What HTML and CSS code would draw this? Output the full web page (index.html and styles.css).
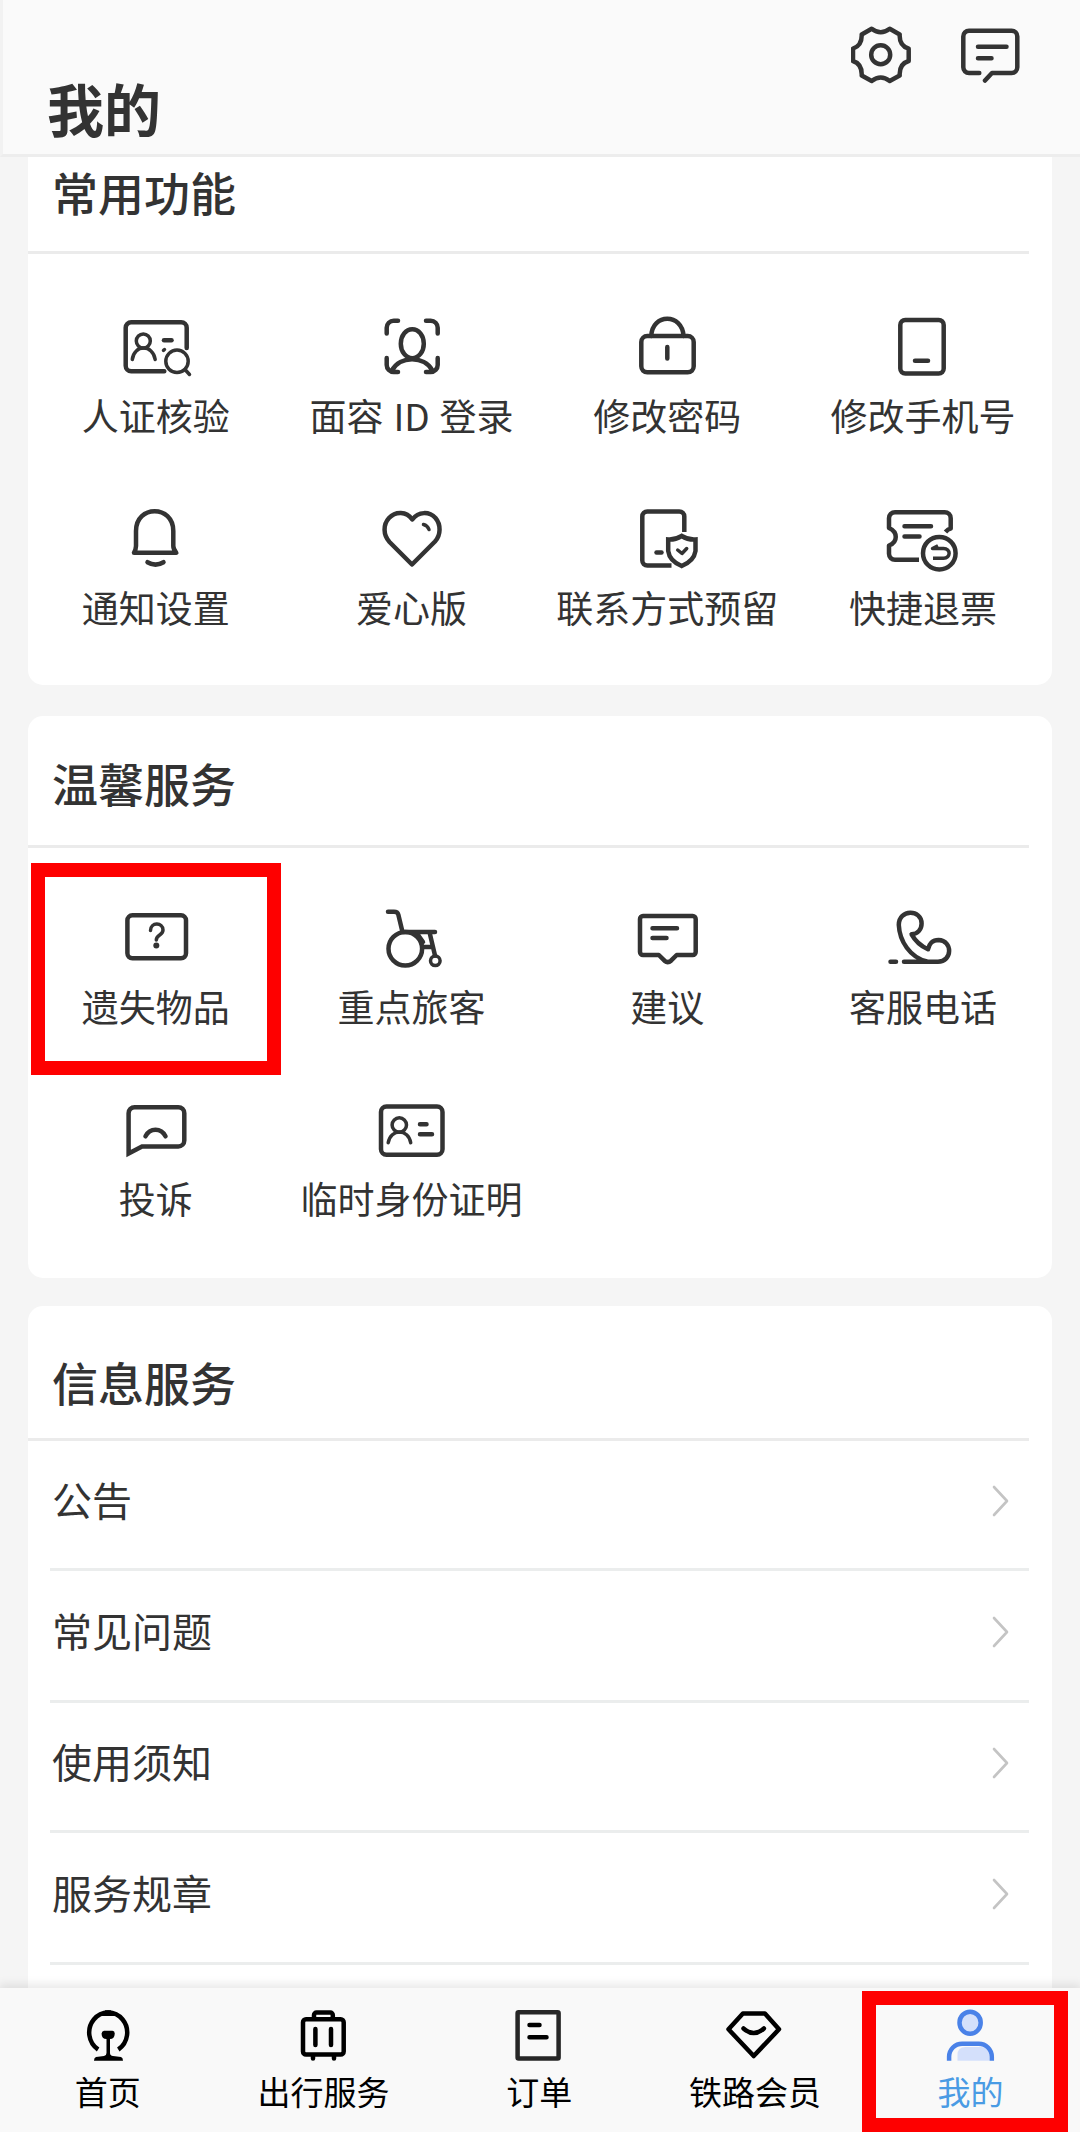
FILE: index.html
```html
<!DOCTYPE html>
<html lang="zh-CN">
<head>
<meta charset="utf-8">
<title>我的</title>
<link rel="stylesheet" href="styles.css">
</head>
<body>
<div class="app">
  <header class="topbar">
    <h1 class="topbar-title">我的</h1>
    <div class="topbar-actions">
      <svg class="action-icon" viewBox="0 0 60 60"><path d="M20.7 3.7Q29.7 10.7 38.7 3.7L48.7 9.5C48.3 16.5 51 21.5 57.7 23.7V36C51 38 48.3 43.500 48.700 50.500L38.700 56Q29.700 49 20.700 56L10.700 50.500C11 43.500 8.500 38 2 36V23.700C8.500 21.500 11 16.500 10.700 9.500Z"/><circle cx="29.700" cy="29.700" r="9.500"/></svg>
      <svg class="action-icon" viewBox="0 0 60 60"><path d="M19.300 48H9a5.700 5.700 0 0 1-5.700-5.700V11.400A5.700 5.700 0 0 1 9 5.700H51.600a5.700 5.700 0 0 1 5.700 5.700V42.300A5.700 5.700 0 0 1 51.600 48H32L25 55.500M18 21.700H46.500M18 33.300H31.500"/></svg>
    </div>
  </header>

  <main class="content">
    <section class="card card-common">
      <h2 class="card-title">常用功能</h2>
      <div class="tiles">
        <div class="tile">
          <svg class="tile-icon" viewBox="0 0 80 72"><path d="M48.300 59.200H15.200a5.500 5.500 0 0 1-5.500-5.500V15.800a5.500 5.500 0 0 1 5.500-5.500H65.200a5.500 5.500 0 0 1 5.500 5.500V36"/><path class="thin" d="M16.300 47.500C18 32.300 37 32.300 39.200 47.500M69 57.500L73.500 62.500"/><circle class="thin" cx="27.300" cy="29" r="7"/><circle class="thin" cx="61" cy="49.300" r="11.200"/><path d="M48 28.300H55.500"/><path class="thin" d="M47.500 38.300L48.500 37.500"/></svg>
          <span class="tile-label">人证核验</span>
        </div>
        <div class="tile">
          <svg class="tile-icon" viewBox="0 0 80 72"><path d="M26 8.700H21.700a7 7 0 0 0-7 7V21.500M54 8.700H58.700a7 7 0 0 1 7 7V21.500M14.700 46V53a7 7 0 0 0 7 7H26M65.700 46V53a7 7 0 0 1-7 7H54M20 58.500C28 43.500 52 43.500 60.500 58.500"/><ellipse cx="40.300" cy="31.700" rx="11.500" ry="14.500"/></svg>
          <span class="tile-label">面容 ID 登录</span>
        </div>
        <div class="tile">
          <svg class="tile-icon" viewBox="0 0 80 72"><rect x="14.300" y="24" width="52.400" height="36.300" rx="6"/><path d="M24.300 24C25 1 55.500 1 56.500 24M40.300 35V46.500"/></svg>
          <span class="tile-label">修改密码</span>
        </div>
        <div class="tile">
          <svg class="tile-icon" viewBox="0 0 80 72"><rect x="17.300" y="8" width="43.400" height="53.500" rx="5"/><path d="M32 48.700H45"/></svg>
          <span class="tile-label">修改手机号</span>
        </div>
        <div class="tile">
          <svg class="tile-icon" viewBox="0 0 80 72"><path d="M20 42V27C20 .7 57.300 .7 57.300 27V42Q57.300 45 60.300 48.800H18Q20 45 20 42ZM31.500 58.200Q39.500 63 47.500 58.200"/></svg>
          <span class="tile-label">通知设置</span>
        </div>
        <div class="tile">
          <svg class="tile-icon" viewBox="0 0 80 72"><path d="M40 60.500L17.500 38C11 31 11 20.500 17 14C23.500 7 34.500 7 40.300 15.500C46.500 7 57.500 7.500 63.500 14C69 20.500 69 31 63 37.500Z"/><path class="thin" d="M51.500 20.500Q55.500 21.500 57 25.500"/></svg>
          <span class="tile-label">爱心版</span>
        </div>
        <div class="tile">
          <svg class="tile-icon" viewBox="0 0 80 72"><path class="butt" d="M44.500 61.500H20.300a5 5 0 0 1-5-5V12.500a5 5 0 0 1 5-5H52.300a5 5 0 0 1 5 5V28"/><path d="M29.500 48.500H34.500"/><path class="sharp" d="M54.700 32Q48 36 41.200 35.500V47Q42.500 57 54.700 62Q67 57 68.500 47V35.500Q61 36 54.700 32Z"/><path class="thin" d="M50.700 46L55 49.500L59.700 44.500"/></svg>
          <span class="tile-label">联系方式预留</span>
        </div>
        <div class="tile">
          <svg class="tile-icon" viewBox="0 0 80 72"><path class="butt" d="M36 55.800H12a6 6 0 0 1-6-6V41.500C15 38 15 28 6 24V14.200a6 6 0 0 1 6-6H61.700a6 6 0 0 1 6 6V24.500Q65 25 62.500 28"/><path d="M21.500 22.200H48M21.500 32.500H36.500"/><circle cx="56.300" cy="49.200" r="16.300"/><path class="thin butt" d="M50 54.200H60.500C68 54.200 68 44.500 60.500 44.500H49.500L55 41.700"/></svg>
          <span class="tile-label">快捷退票</span>
        </div>
      </div>
    </section>

    <section class="card card-care">
      <h2 class="card-title">温馨服务</h2>
      <div class="tiles">
        <div class="tile tile-marked">
          <svg class="tile-icon" viewBox="0 0 80 72"><rect x="11.400" y="13.300" width="58.600" height="43" rx="5"/><path class="thin" d="M34.500 28.500C34.500 20 47 20 47 28C47 33.500 40.300 32.500 40.300 38"/><circle class="solid" cx="40.300" cy="43.500" r="3"/></svg>
          <span class="tile-label">遗失物品</span>
        </div>
        <div class="tile">
          <svg class="tile-icon" viewBox="0 0 80 72"><path d="M16 9.700H22Q25.500 9.700 26.300 12.500L30.500 30H63M57.700 31L63 53.500M51.500 45H60.500M45 31.500L51 40"/><circle cx="33.300" cy="46.700" r="16.800"/><circle class="thin" cx="63.300" cy="58.800" r="4.800"/></svg>
          <span class="tile-label">重点旅客</span>
        </div>
        <div class="tile">
          <svg class="tile-icon" viewBox="0 0 80 72"><path d="M16 14H65.700a3 3 0 0 1 3 3V50a3 3 0 0 1-3 3H49.700L44 58.700Q40.800 61.500 37.500 58.700L31.800 53H16a3 3 0 0 1-3-3V17a3 3 0 0 1 3-3ZM25.500 26.300H50M25.500 36H39.500"/></svg>
          <span class="tile-label">建议</span>
        </div>
        <div class="tile">
          <svg class="tile-icon" viewBox="0 0 80 72"><path d="M21 59.700H55C69.500 59.700 70 38.500 55.500 38C49.500 38 46 42 45 47.300C38 44 32 38.500 28.600 32.300C35 32 38.600 27 38.600 21.500C38.600 7 15.800 7 15.800 23C16.500 39 27 55.500 44 59.500M7.500 59.700H13"/></svg>
          <span class="tile-label">客服电话</span>
        </div>
        <div class="tile">
          <svg class="tile-icon" viewBox="0 0 80 72"><path class="sharp" d="M12.600 59.500V19.200a6 6 0 0 1 6-6H62.300a6 6 0 0 1 6 6V46.500a6 6 0 0 1-6 6H26Z"/><path d="M29.500 42.300C34 33.700 45 33.700 49.500 42.300"/></svg>
          <span class="tile-label">投诉</span>
        </div>
        <div class="tile">
          <svg class="tile-icon" viewBox="0 0 80 72"><rect x="9" y="12.500" width="61.500" height="48.300" rx="5.500"/><circle class="thin" cx="27.300" cy="31" r="7.200"/><path class="thin" d="M16.200 48.800C18.500 34.500 36.500 34.500 38.700 48.800"/><path d="M48 30.200H54.500M48 40.200H60"/></svg>
          <span class="tile-label">临时身份证明</span>
        </div>
      </div>
    </section>

    <section class="card card-info">
      <h2 class="card-title">信息服务</h2>
      <ul class="links">
        <li class="link"><span class="link-text">公告</span><svg class="chevron" viewBox="0 0 18 32"><path d="M2 2L15 16L2 30"/></svg></li>
        <li class="link"><span class="link-text">常见问题</span><svg class="chevron" viewBox="0 0 18 32"><path d="M2 2L15 16L2 30"/></svg></li>
        <li class="link"><span class="link-text">使用须知</span><svg class="chevron" viewBox="0 0 18 32"><path d="M2 2L15 16L2 30"/></svg></li>
        <li class="link"><span class="link-text">服务规章</span><svg class="chevron" viewBox="0 0 18 32"><path d="M2 2L15 16L2 30"/></svg></li>
      </ul>
    </section>
  </main>

  <nav class="tabs">
    <div class="tab">
      <svg class="tab-icon" viewBox="0 0 64 56"><path class="butt" d="M22.100 41.500A19 20 0 1 1 42.300 41.500"/><path class="solid" d="M29 2.300H35Q36 6 39 8H25Q28.500 6 29 2.300ZM28 22.700H36.500Q39 23 38.700 26Q38.500 31 34 31V45Q34 47.500 37 48L45 49Q47 49.500 47 52.700H18Q18 49.500 20 49L28 48Q30.500 47.500 30.500 45V31Q25.700 31 25.600 26Q25.500 23 28 22.700Z"/></svg>
      <span class="tab-label">首页</span>
    </div>
    <div class="tab">
      <svg class="tab-icon" viewBox="0 0 64 56"><rect x="11" y="11.300" width="40.700" height="35.200" rx="3"/><path class="butt" d="M22 11V7a2.500 2.500 0 0 1 2.500-2.500H38.300a2.500 2.500 0 0 1 2.500 2.500V11"/><path d="M23.400 21V37M39 21V37M21 48V50.500M42 48V50.500"/></svg>
      <span class="tab-label">出行服务</span>
    </div>
    <div class="tab">
      <svg class="tab-icon" viewBox="0 0 64 56"><rect class="order-frame" x="10.600" y="4.300" width="41" height="46.200" rx="1"/><path d="M22.500 17H32.500M22.500 29.300H39.500"/></svg>
      <span class="tab-label">订单</span>
    </div>
    <div class="tab">
      <svg class="tab-icon" viewBox="0 0 64 56"><path d="M19.900 5.500H41.900L56 21.300L30.700 48L5.500 21.300ZM20.500 20.500Q30.700 29.500 40.900 20.500"/></svg>
      <span class="tab-label">铁路会员</span>
    </div>
    <div class="tab tab-active">
      <svg class="tab-icon" viewBox="0 0 64 56"><ellipse class="tint-fill" cx="31.100" cy="14.700" rx="10.600" ry="11"/><path class="tint" d="M18.500 52.700V47Q18.500 39 26.500 39H42Q50 39 50 47V52.700Z"/><path class="butt" d="M10.100 52.700V48.700A13 13 0 0 1 23.100 35.700H39.800A13 13 0 0 1 52.800 48.700V52.700"/></svg>
      <span class="tab-label">我的</span>
    </div>
  </nav>
</div>
</body>
</html>
```
FILE: styles.css
```css
*, *::before, *::after { box-sizing: border-box; margin: 0; padding: 0; }

body {
  background: #f5f5f5;
  color: #333;
  font-family: "Noto Sans CJK SC", "Noto Sans", sans-serif;
}

svg {
  display: block;
  fill: none;
  stroke: currentColor;
  stroke-width: 4.5;
  stroke-linecap: round;
  stroke-linejoin: round;
}
.thin { stroke-width: 3.5; }
.butt { stroke-linecap: butt; }
.sharp { stroke-linejoin: miter; }
.solid { fill: currentColor; stroke: none; }

.app {
  display: flex;
  flex-direction: column;
  width: 1080px;
  height: 2132px;
  overflow: hidden;
}

/* Top bar */
.topbar {
  display: flex;
  justify-content: space-between;
  flex: none;
  height: 157px;
  padding: 25px 60px 0 44px;
  background: #fafafa;
  border-left: 3px solid #f2f2f2;
  border-bottom: 3px solid #ededed;
}
.topbar-title {
  margin-top: 42px;
  font-size: 57px;
  line-height: 80px;
  font-weight: 700;
}
.topbar-actions { display: flex; gap: 49px; }
.action-icon { width: 60px; height: 60px; }

/* Scrolling content */
.content {
  display: flex;
  flex-direction: column;
  flex: 1;
  min-height: 0;
  padding: 0 28px;
  overflow: hidden;
}
.card { flex: none; background: #fff; border-radius: 15px; }
.card-title {
  margin-right: 23px;
  padding-left: 24px;
  border-bottom: 3px solid #ebebeb;
  font-size: 46px;
  line-height: 68px;
  font-weight: 500;
}

.card-common { height: 528px; border-radius: 0 0 15px 15px; }
.card-common .card-title { padding-bottom: 26px; }
.card-common .tiles { padding-top: 58px; }

.card-care { height: 562px; margin-top: 31px; }
.card-care .card-title { padding-top: 32px; padding-bottom: 29px; }
.card-care .tiles { padding-top: 54px; }
.card-care .tile { gap: 9px; }
.card-care .tiles { row-gap: 64.5px; }

.card-info { height: 700px; margin-top: 28px; border-radius: 15px 15px 0 0; }
.card-info .card-title { padding-top: 41px; padding-bottom: 23px; }

/* Shortcut tiles */
.tiles {
  display: grid;
  grid-template-columns: repeat(4, 255.7px);
  row-gap: 65.5px;
}
.tile {
  position: relative;
  display: flex;
  flex-direction: column;
  align-items: center;
  gap: 8px;
}
.tile-icon { width: 80px; height: 72px; }
.tile-label {
  font-size: 37px;
  line-height: 46px;
  white-space: nowrap;
  word-spacing: 1.5px;
}

/* Red highlight frames drawn over the tile and the tab */
.tile-marked::after,
.tab-active::after {
  content: "";
  position: absolute;
  border: 14px solid #fe0000;
}
.tile-marked::after { left: 3px; top: -39px; width: 250px; height: 212px; }
.tab-active::after { left: -1px; top: 3px; width: 206px; height: 141px; }

/* Link rows */
.links { list-style: none; margin: 0 23px 0 22px; }
.link {
  display: flex;
  align-items: center;
  justify-content: space-between;
  height: 130px;
  padding: 0 19px 8px 2px;
  border-bottom: 3px solid #ebeded;
}
.link:nth-child(even) { height: 132px; }
.link-text { margin-bottom: 4px; font-size: 40px; line-height: 60px; }
.chevron { width: 18px; height: 32px; color: #c4c4c4; stroke-width: 2.6; }

/* Bottom tabs */
.tabs {
  position: relative;
  display: grid;
  grid-template-columns: repeat(5, 215.7px);
  flex: none;
  height: 144px;
  background: #f9f9f9;
  box-shadow: 0 -3px 9px 1px rgba(0, 0, 0, 0.09);
  color: #000;
}
.tab {
  position: relative;
  display: flex;
  flex-direction: column;
  align-items: center;
  gap: 7px;
  padding-top: 20px;
}
.tab-icon { width: 64px; height: 56px; }
.tab-label { font-size: 33px; line-height: 40px; }
.order-frame { stroke: #262626; }
.tab-active { color: #4a82e8; }
.tab-active .tab-label { color: #4a9be4; }
.tint { fill: #d4e0fb; stroke: none; }
.tint-fill { fill: #d4e0fb; }
```
